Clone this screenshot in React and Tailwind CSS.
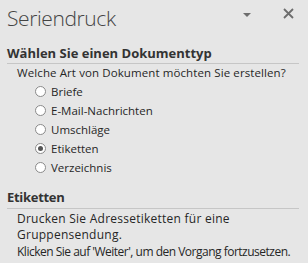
export default function App() {
  const options = ["Briefe", "E-Mail-Nachrichten", "Umschläge", "Etiketten", "Verzeichnis"];
  const selected = "Etiketten";
  return (
    <div
      className="w-[308px] h-[263px] bg-[#e6e6e6] text-[#262626] overflow-hidden"
      style={{ fontFamily: '"Open Sans", "Noto Sans", sans-serif' }}
    >
      <div className="flex items-center h-[36px] pl-[7px] pr-[14px]">
        <div className="flex-1 text-[21px] font-light text-[#444444] leading-none tracking-[-0.4px]">Seriendruck</div>
        <svg width="8" height="4" viewBox="0 0 8 4" className="self-start mt-[13px] mr-[32px]">
          <polygon points="0,0 8,0 4,4" fill="#6d6d6d" />
        </svg>
        <svg width="11" height="11" viewBox="0 0 11 11" className="self-start mt-[8px]">
          <path d="M1 1 L10 10 M10 1 L1 10" stroke="#6d6d6d" strokeWidth="1.8" />
        </svg>
      </div>
      <div className="ml-[7px] mr-[9px] mt-[9px] border-b border-[#c6c6c6] pb-[2px]">
        <div className="text-[13px] font-bold leading-[16px] text-[#333333]">Wählen Sie einen Dokumenttyp</div>
      </div>
      <div className="pl-[17px] pt-[1px] text-[11.5px] leading-[16px] tracking-[0.1px]">Welche Art von Dokument möchten Sie erstellen?</div>
      <div className="flex flex-col pl-[35px] pt-[1px]">
        {options.map((o) => (
          <div key={o} className="flex items-center h-[19px] text-[11.5px]">
            <span className="w-[11px] h-[11px] rounded-full border border-[#8a8a8a] bg-white flex items-center justify-center mr-[5px]">
              {o === selected && <span className="w-[5px] h-[5px] rounded-full bg-[#555555]" />}
            </span>
            {o}
          </div>
        ))}
      </div>
      <div className="ml-[7px] mr-[9px] mt-[12px] border-b border-[#c6c6c6] pb-[3px]">
        <div className="text-[13px] font-bold leading-[16px] text-[#333333] tracking-[-0.3px]">Etiketten</div>
      </div>
      <div className="pl-[17px] pt-[2px] text-[12px] leading-[16px] pr-[8px]">
        <div className="tracking-[0.25px]">Drucken Sie Adressetiketten für eine<br />Gruppensendung.</div>
        <div className="mt-[1px] whitespace-nowrap tracking-[-0.5px]">Klicken Sie auf 'Weiter', um den Vorgang fortzusetzen.</div>
      </div>
    </div>
  );
}
